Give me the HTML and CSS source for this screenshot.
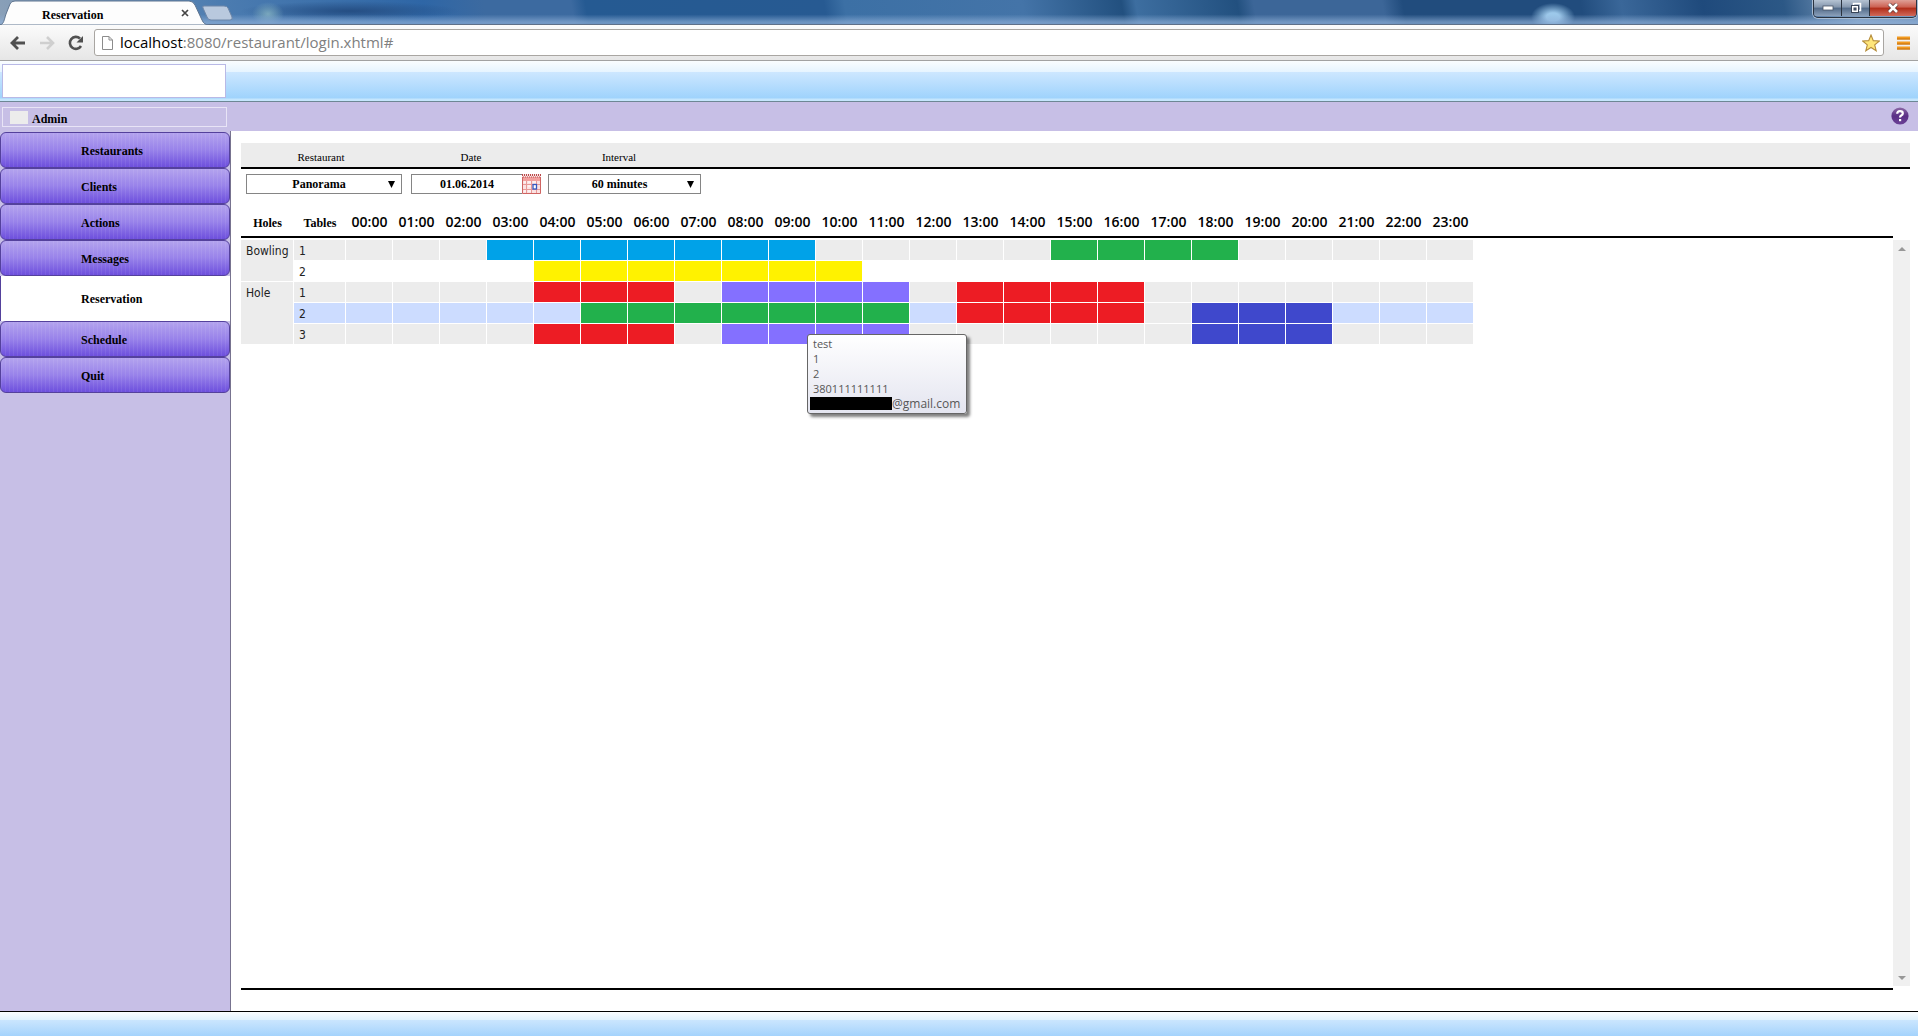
FILE: index.html
```html
<!DOCTYPE html>
<html lang="en">
<head>
<meta charset="utf-8">
<title>Reservation</title>
<link rel="stylesheet" href="styles.css">
</head>
<body>
<div class="titlebar">
  <div class="tab">
    <svg class="tab-shape" width="234" height="25" viewBox="0 0 234 25" aria-hidden="true">
      <path d="M0 25C4 24 4 20 6 14L10 4Q11 1 15 1H189Q193 1 195 5L202 20Q204 25 209 25Z" fill="#fdfdfd" stroke="#5f7590"/>
      <path d="M204 6H224Q227 6 228 8L232 17Q233 20 230 20H211Q208 20 207 17L203 8Q202 6 204 6Z" fill="#b9c9de" stroke="#6d86a8"/>
    </svg>
    <span class="tab-title">Reservation</span>
    <button class="tab-close" aria-label="Close tab"><svg width="8" height="8" viewBox="0 0 8 8"><path d="M1 1L7 7M7 1L1 7" stroke="#444" stroke-width="1.7"/></svg></button>
  </div>
  <div class="window-buttons">
    <button class="win" aria-label="Minimize"><svg width="12" height="6" viewBox="0 0 12 6"><rect x="1" y="1" width="10" height="4" fill="#fff" stroke="#4a5568" stroke-width=".8"/></svg></button>
    <button class="win" aria-label="Restore"><svg width="12" height="12" viewBox="0 0 12 12"><path d="M3.500 3V1.500H10.500V8.500H9" fill="none" stroke="#fff" stroke-width="1.500"/><rect x="1.500" y="3.500" width="7" height="7" fill="#fff" stroke="#3a4658"/><rect x="4" y="6" width="2" height="2" fill="#536783" stroke="#3a4658"/></svg></button>
    <button class="win win-close" aria-label="Close"><svg width="12" height="10" viewBox="0 0 12 10"><path d="M2 1L10 9M10 1L2 9" stroke="#5c3434" stroke-width="4"/><path d="M2 1L10 9M10 1L2 9" stroke="#fff" stroke-width="2.600"/></svg></button>
  </div>
</div>

<div class="toolbar">
  <button class="tool" aria-label="Back"><svg width="16" height="14" viewBox="0 0 16 14"><path d="M15 7H2M8 1L2 7L8 13" fill="none" stroke="#505050" stroke-width="2.800"/></svg></button>
  <button class="tool" aria-label="Forward"><svg width="16" height="14" viewBox="0 0 16 14"><path d="M1 7H14M8 1L14 7L8 13" fill="none" stroke="#cfcfcf" stroke-width="2.600"/></svg></button>
  <button class="tool" aria-label="Reload"><svg width="16" height="16" viewBox="0 0 16 16"><path d="M13 11A6 6 0 1 1 12 3.500" fill="none" stroke="#505050" stroke-width="2.600"/><path d="M15 1V7.500H8.500Z" fill="#505050"/></svg></button>
  <div class="address">
    <svg width="13" height="16" viewBox="0 0 13 16" aria-hidden="true"><path d="M1.500 1.500H8L11.500 5V14.500H1.500ZM8 1.500V5H11.500" fill="#fff" stroke="#8c8c8c"/></svg>
    <span class="url">localhost<span class="url-path">:8080/restaurant/login.xhtml#</span></span>
    <button class="star" aria-label="Bookmark"><svg width="18" height="18" viewBox="0 0 18 18"><path d="M9 1L11.300 6.600L17.300 7L12.700 10.900L14.200 16.700L9 13.500L3.800 16.700L5.300 10.900L.7 7L6.700 6.600Z" fill="#ffe67a" stroke="#b68d3c" stroke-width="1.100"/></svg></button>
  </div>
  <button class="tool" aria-label="Menu"><svg width="13" height="14" viewBox="0 0 13 14"><path d="M0 2H13M0 7H13M0 12H13" stroke="#f39a1e" stroke-width="3"/><path d="M0 3H13M0 8H13M0 13H13" stroke="#c06f10"/></svg></button>
</div>

<header class="banner"><div class="logo"></div></header>

<div class="userbar">
  <div class="user"><span class="avatar"></span>Admin</div>
  <a class="help" href="#" aria-label="Help"><svg width="18" height="18" viewBox="0 0 18 18">
    <defs><linearGradient id="orb" x2="0" y2="1"><stop offset="0" stop-color="#8c6aa6"/><stop offset=".5" stop-color="#5a2f86"/><stop offset="1" stop-color="#6b4196"/></linearGradient></defs>
    <circle cx="9" cy="9" r="8.600" fill="url(#orb)"/>
    <path d="M6.200 6.700Q6.200 4.200 9 4.200Q11.800 4.200 11.800 6.400Q11.800 7.700 10.200 8.500Q9 9.200 9 10.600" fill="none" stroke="#fff" stroke-width="2.200"/><rect x="8" y="12" width="2.200" height="2.200" fill="#fff"/></svg></a>
</div>

<div class="body">
  <nav class="menu">
    <a href="#">Restaurants</a>
    <a href="#">Clients</a>
    <a href="#">Actions</a>
    <a href="#">Messages</a>
    <a href="#" class="current">Reservation</a>
    <a href="#">Schedule</a>
    <a href="#">Quit</a>
  </nav>

  <main class="content">
    <div class="filter-labels">
      <label for="restaurant">Restaurant</label>
      <label for="date">Date</label>
      <label for="interval">Interval</label>
    </div>
    <div class="filters">
      <select id="restaurant"><option>Panorama</option></select>
      <div class="date">
        <input id="date" type="text" value="01.06.2014">
        <button aria-label="Open calendar"><svg width="19" height="20" viewBox="0 0 19 20">
          <rect width="19" height="20" fill="#fbe2e2"/><path d="M0 3H19V7H0Z" fill="#f2a09e"/>
          <path d="M0 1H19" stroke="#b84a4a" stroke-width="2" stroke-dasharray="1 1"/><path d="M1 3H19" stroke="#b84a4a" stroke-dasharray="1 1"/>
          <path d="M4.500 7V19M9.500 7V19M14.500 7V19M1 10.500H18M1 15.500H18" fill="none" stroke="#e89a98"/>
          <path d="M.5 3V19.500H18.500V3" fill="none" stroke="#cf6462"/>
          <path d="M2 8H4M6 8H9M11 8H14M6 12H9M2 17H4M6 17H9" stroke="#fff"/><rect x="11" y="10.500" width="3.500" height="4.500" fill="#fff" stroke="#3558c0" stroke-width="1.300"/></svg></button>
      </div>
      <select id="interval"><option>60 minutes</option></select>
    </div>

    <div class="schedule">
      <div class="grid-area">
        <table>
          <colgroup><col class="c-hole"><col class="c-table"><col span="24" class="c-hour"><col></colgroup>
          <thead><tr><th class="name">Holes</th><th class="name">Tables</th><th>00:00</th><th>01:00</th><th>02:00</th><th>03:00</th><th>04:00</th><th>05:00</th><th>06:00</th><th>07:00</th><th>08:00</th><th>09:00</th><th>10:00</th><th>11:00</th><th>12:00</th><th>13:00</th><th>14:00</th><th>15:00</th><th>16:00</th><th>17:00</th><th>18:00</th><th>19:00</th><th>20:00</th><th>21:00</th><th>22:00</th><th>23:00</th><td></td></tr></thead>
          <tbody>
            <tr class="first"><th rowspan="2">Bowling</th><th>1</th>
              <td></td><td></td><td></td><td class="sky"></td><td class="sky"></td><td class="sky"></td><td class="sky"></td><td class="sky"></td><td class="sky"></td><td class="sky"></td><td></td><td></td>
              <td></td><td></td><td></td><td class="green"></td><td class="green"></td><td class="green"></td><td class="green"></td><td></td><td></td><td></td><td></td><td></td></tr>
            <tr class="plain"><th>2</th>
              <td></td><td></td><td></td><td></td><td class="yellow"></td><td class="yellow"></td><td class="yellow"></td><td class="yellow"></td><td class="yellow"></td><td class="yellow"></td><td class="yellow"></td><td></td>
              <td></td><td></td><td></td><td></td><td></td><td></td><td></td><td></td><td></td><td></td><td></td><td></td></tr>
            <tr><th rowspan="3">Hole</th><th>1</th>
              <td></td><td></td><td></td><td></td><td class="red"></td><td class="red"></td><td class="red"></td><td></td><td class="violet"></td><td class="violet"></td><td class="violet"></td><td class="violet"></td>
              <td></td><td class="red"></td><td class="red"></td><td class="red"></td><td class="red"></td><td></td><td></td><td></td><td></td><td></td><td></td><td></td></tr>
            <tr class="hover"><th>2</th>
              <td></td><td></td><td></td><td></td><td></td><td class="green"></td><td class="green"></td><td class="green"></td><td class="green"></td><td class="green"></td><td class="green"></td><td class="green"></td>
              <td></td><td class="red"></td><td class="red"></td><td class="red"></td><td class="red"></td><td class="grey"></td><td class="navy"></td><td class="navy"></td><td class="navy"></td><td></td><td></td><td></td></tr>
            <tr><th>3</th>
              <td></td><td></td><td></td><td></td><td class="red"></td><td class="red"></td><td class="red"></td><td></td><td class="violet"></td><td class="violet tip-anchor"><div class="tip" role="tooltip"><p>test</p><p>1</p><p>2</p><p>380111111111</p><p class="mail"><span class="redacted"></span>@gmail.com</p></div></td><td class="violet"></td><td class="violet"></td>
              <td></td><td></td><td></td><td></td><td></td><td></td><td class="navy"></td><td class="navy"></td><td class="navy"></td><td></td><td></td><td></td></tr>
          </tbody>
        </table>
      </div>
      <div class="scroll">
        <button aria-label="Scroll up"><svg width="8" height="4" viewBox="0 0 8 4"><path d="M4 0L8 4H0Z" fill="#989898"/></svg></button>
        <button aria-label="Scroll down"><svg width="8" height="4" viewBox="0 0 8 4"><path d="M0 0H8L4 4Z" fill="#989898"/></svg></button>
      </div>
    </div>
  </main>
</div>
<footer class="footer"></footer>
</body>
</html>
```
FILE: styles.css
```css
* { box-sizing: border-box; }

body {
  margin: 0;
  min-height: 100vh;
  display: flex;
  flex-direction: column;
  background: #fff;
  color: #000;
  font: 12px/16px "Liberation Serif", serif;
}

button {
  display: flex;
  align-items: center;
  justify-content: center;
  padding: 0;
  border: 0;
  background: none;
}

svg { display: block; flex: none; }

/* Window frame */
.titlebar {
  display: flex;
  justify-content: space-between;
  height: 25px;
  border-bottom: 1px solid #5f7088;
  background:
    linear-gradient(transparent 60%, #8fb0d8aa 92%),
    radial-gradient(ellipse 22px 14px at 1553px 17px, #9cc8ea 30%, transparent),
    radial-gradient(ellipse 16px 12px at 268px 14px, #79a7bd, transparent),
    radial-gradient(ellipse 110px 10px at 350px 11px, #254e83, transparent),
    linear-gradient(80deg, #8aa0b8 0, #4c7cb0 220px, #2e66a6 420px, #3c6aa0 480px, #3c6aa0 566px, #255a92 580px, #275a92 815px, #3c70a5 835px, #4474a8 1010px, #22507f 1108px, #3d6ea0 1122px, #22507f 1222px, #3c6698 1238px, #3c6698 1365px, #214c7d 1385px, #214c7d 1560px, #3a6799 1600px, #1f4a7c 1680px, #2c5886 1760px, #7f9dbf 1830px, #6f90b8 100%);
}

.tab {
  position: relative;
  display: flex;
  width: 234px;
  padding: 7px 0 0 42px;
}

.tab-shape { position: absolute; left: 0; top: 0; }
.tab-title { position: relative; font-weight: bold; width: 138px; }
.tab-close { position: relative; width: 10px; height: 12px; }

.window-buttons {
  display: flex;
  height: 18px;
  margin-right: 1px;
  border: 1px solid #2a3340;
  border-top: 0;
  border-radius: 0 0 5px 5px;
  overflow: hidden;
  box-shadow: 0 0 0 1px #a9bdd4;
}

.win {
  width: 28px;
  height: 16px;
  border-right: 1px solid #2a3340;
  background: linear-gradient(#b5c3d3, #8496ad 45%, #526a88 50%, #8ba0ba);
}

.win-close {
  width: 46px;
  border: 0;
  background: linear-gradient(#dfa097, #cc5f50 45%, #b12c18 50%, #d0695a);
}

.toolbar {
  display: flex;
  align-items: center;
  height: 36px;
  padding: 0 7px 0 3px;
  border-bottom: 1px solid #a2a2a2;
  background: linear-gradient(#fbfbfb, #e6e6e6);
}

.tool { width: 29px; height: 28px; }
.toolbar > .tool:last-child { width: 27px; padding-left: 12px; }

.address {
  flex: 1;
  display: flex;
  align-items: center;
  gap: 6px;
  height: 27px;
  margin-left: 4px;
  padding: 0 3px 0 6px;
  border: 1px solid #a9a6a2;
  border-radius: 3px;
  background: #fff;
}

.url { flex: 1; padding-bottom: 2px; font: 15px/24px "Open Sans", sans-serif; }
.url-path { color: #808080; }

/* Application header */
.banner {
  height: 41px;
  padding: 3px 2px;
  border-bottom: 1px solid #6d8795;
  background: linear-gradient(#fafdff 0, #e6f4ff 11px, #cde7ff 11px, #9fd3fc 37px, #c5e6fd 38px);
}

.logo {
  width: 224px;
  height: 34px;
  border: 1px solid #b9b9e6;
  background: #fff;
}

.userbar {
  display: flex;
  align-items: flex-start;
  justify-content: space-between;
  height: 29px;
  padding: 5px 9px 0 2px;
  background: #c7bfe6;
}

.user {
  display: flex;
  align-items: center;
  gap: 4px;
  width: 225px;
  height: 20px;
  padding: 3px 0 0 7px;
  border: 1px solid #e8e4f6;
  font-weight: bold;
}

.avatar { width: 18px; height: 13px; margin-bottom: 3px; background: #ececec; }

.body { flex: 1; display: flex; }

.menu {
  flex: none;
  width: 231px;
  padding-top: 1px;
  border-right: 1px solid #77738f;
  background: #c7bfe6;
}

.menu a {
  display: flex;
  align-items: center;
  height: 36px;
  padding: 1px 0 0 80px;
  border: 1px solid #54419c;
  border-radius: 6px;
  background:
    repeating-linear-gradient(90deg, #ffffff12 0 1px, transparent 1px 4px),
    linear-gradient(#b3a3ee, #9882ea 50%, #6d4fdd);
  color: #000;
  font-weight: bold;
  text-decoration: none;
}

.menu .current {
  height: 45px;
  border-width: 0 0 0 1px;
  border-radius: 0;
  background: #fff;
}

/* Reservation panel */
.content {
  flex: 1;
  display: flex;
  flex-direction: column;
  min-width: 0;
  padding: 12px 8px 21px 10px;
}

.filter-labels, .filters {
  display: grid;
  grid-template-columns: 161px 139px 160px;
}

.filter-labels {
  grid-template-columns: 160px 140px 156px;
  height: 26px;
  padding-top: 6px;
  border-bottom: 2px solid #000;
  background: #ececec;
  font-size: 11px;
  text-align: center;
}

.filters { padding: 5px 0; }

.filters select, .filters input {
  height: 20px;
  margin: 0;
  padding: 0;
  border: 1px solid #858585;
  border-radius: 0;
  background: #fff;
  color: #000;
  font: bold 12px "Liberation Serif", serif;
  text-align: center;
}

.filters select {
  appearance: none;
  margin-left: 5px;
  padding-right: 10px;
  background: #fff url("data:image/svg+xml,%3Csvg xmlns='http://www.w3.org/2000/svg' width='7' height='7'%3E%3Cpath d='M0 0H7L3.500 7Z'/%3E%3C/svg%3E") no-repeat right 6px center;
}

.filters select:last-child { margin-left: 7px; }

.date { display: flex; padding-left: 9px; }
.date input { flex: 1; min-width: 0; border-right: 0; }

.schedule { flex: 1; display: flex; }

.grid-area {
  flex: 1;
  min-width: 0;
  border-bottom: 2px solid #000;
}

table {
  width: 100%;
  table-layout: fixed;
  border-collapse: separate;
  border-spacing: 0;
  font: 12px/16px "DejaVu Sans Condensed", "DejaVu Sans", sans-serif;
}

.c-hole { width: 53px; }
.c-table { width: 52px; }
.c-hour { width: 47px; }

thead th, thead td {
  height: 39px;
  padding: 8px 0 0;
  border-bottom: 2px solid #000;
  font: 600 14px/16px "Open Sans", sans-serif;
  text-align: center;
}

thead .name { padding-top: 10px; font: bold 12px/16px "Liberation Serif", serif; }

tbody th, tbody td {
  height: 21px;
  padding: 0;
  border: solid #fff;
  border-width: 0 1px 1px 0;
  background: #ececec;
  color: #222;
}

tbody th {
  padding: 3px 0 0 5px;
  font-weight: normal;
  text-align: left;
  vertical-align: top;
}

.first th, .first td { height: 23px; border-top-width: 2px; }
.plain th, .plain td { background: #fff; }
.hover th, .hover td { background: #ccdcff; }

tbody .sky { background: #00a2e8; }
tbody .green { background: #22b14c; }
tbody .yellow { background: #fff200; }
tbody .red { background: #ed1c24; }
tbody .violet { background: #8470ff; }
tbody .navy { background: #3f48cc; }
tbody .grey { background: #ececec; }

.tip-anchor { position: relative; }

.tip {
  position: absolute;
  left: 38px;
  top: 10px;
  width: 160px;
  height: 80px;
  padding: 1px 3px 0 2px;
  border: 1px solid #666;
  border-radius: 3px;
  background: linear-gradient(#fff, #e4e5f0);
  box-shadow: 3px 3px 3px #00000080;
  color: #575757;
  font: 11px/15px "Open Sans", sans-serif;
  z-index: 1;
}

.tip p { margin: 0; padding-left: 3px; }
.tip .mail { display: flex; padding: 0; font-size: 12px; }
.redacted { width: 82px; height: 13px; margin-top: 1px; background: #000; }

.scroll {
  display: flex;
  flex-direction: column;
  justify-content: space-between;
  width: 17px;
  margin: 41px 0 4px;
  background: #f0f0f0;
}

.scroll button { height: 17px; }

.footer {
  height: 25px;
  border-top: 1px solid #000;
  background: linear-gradient(#fafdff 0, #e0f2fe 8px, #cbe6fe 8px, #a4d3fc);
}
```
